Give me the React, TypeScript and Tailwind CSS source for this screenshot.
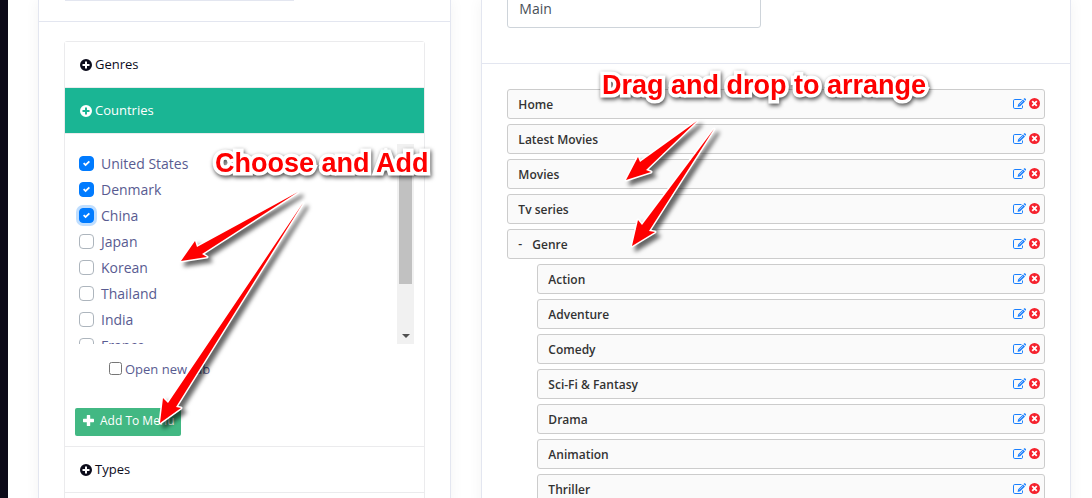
import React, { useState } from 'react'

interface MenuNode {
  label: string
  children?: MenuNode[]
}

const COUNTRIES = ['United States', 'Denmark', 'China', 'Japan', 'Korean', 'Thailand', 'India', 'France']

const MENU: MenuNode[] = [
  { label: 'Home' },
  { label: 'Latest Movies' },
  { label: 'Movies' },
  { label: 'Tv series' },
  {
    label: 'Genre',
    children: [
      { label: 'Action' },
      { label: 'Adventure' },
      { label: 'Comedy' },
      { label: 'Sci-Fi & Fantasy' },
      { label: 'Drama' },
      { label: 'Animation' },
      { label: 'Thriller' },
    ],
  },
]

const ARROWS = [
  '181,261 195,241 197,247 298,192 202,254 207,257',
  '160,423 163,398 168,403 303,203 176,407 181,408',
  '626,180 638,157 640,162 697,121 646,170 651,172',
  '632,246 638,220 642,225 714,129 649,231 655,232',
]

const PlusCircleIcon: React.FC = () => (
  <svg viewBox="0 0 12 12" className="size-3" fill="currentColor" fillRule="evenodd">
    <path d="M6 0a6 6 0 1 0 0 12A6 6 0 0 0 6 0zM5 2.500h2V5h2.500v2H7v2.500H5V7H2.500V5H5z" />
  </svg>
)

const PlusIcon: React.FC = () => (
  <svg viewBox="0 0 11 11" className="size-[11px]" fill="currentColor">
    <path d="M4.4 0h2.2a.6.6 0 0 1 .6.6v3.2h3.2a.6.6 0 0 1 .6.6v2.2a.6.6 0 0 1-.6.6H7.200v3.2a.6.6 0 0 1-.6.6H4.4a.6.6 0 0 1-.6-.6V7.200H.6a.6.6 0 0 1-.6-.6V4.4a.6.6 0 0 1 .6-.6h3.200V.6a.6.6 0 0 1 .6-.6z" />
  </svg>
)

const EditIcon: React.FC = () => (
  <svg viewBox="0 0 13 12" className="h-3 w-[13px]" fill="none">
    <path stroke="currentColor" d="M8.500 1.500H1.800Q.5 1.500.5 2.800v6.400Q.5 10.500 1.800 10.500h6.900Q9.500 10.500 9.500 9.200V7.500" />
    <path fill="currentColor" d="M4.600 8.900l.6-2.700L10 1.400l2 2-4.800 4.800z M10.600.9l.6-.6q.4-.3.8 0l1 1q.3.4 0 .8l-.6.6z" />
    <path stroke="#fafafa" strokeWidth=".6" d="M6.400 6.700l3.700-3.700" />
  </svg>
)

const RemoveIcon: React.FC = () => (
  <svg viewBox="0 0 12 12" className="size-[11px]">
    <circle cx="6" cy="6" r="6" fill="currentColor" />
    <path stroke="#fff" strokeWidth="2" d="M3.500 3.500l5 5M8.500 3.500l-5 5" />
  </svg>
)

const AccordionHeader: React.FC<{ label: string; active?: boolean }> = ({ label, active }) => (
  <button
    type="button"
    className={`flex h-[46px] w-full items-center gap-[3px] border-b border-[#ebebed] px-[15px] text-left text-[13px] ${
      active ? 'bg-[#1ab594] font-medium text-white' : 'bg-white text-[#0c0c1b]'
    }`}
  >
    <PlusCircleIcon />
    {label}
  </button>
)

const CountryOption: React.FC<{ label: string; checked: boolean; focused: boolean; onToggle: () => void }> = ({
  label,
  checked,
  focused,
  onToggle,
}) => (
  <label className="flex h-[26px] items-center gap-[7px] text-[14px] text-[#595b91]">
    <span className="relative flex">
      <input
        type="checkbox"
        checked={checked}
        onChange={onToggle}
        className={`size-[15px] appearance-none rounded-[4px] border border-[#adb5bd] bg-white checked:border-[#007bff] checked:bg-[#007bff] ${
          focused ? 'ring-3 ring-[#bfdeff]' : ''
        }`}
      />
      {checked && (
        <svg viewBox="0 0 8 8" className="pointer-events-none absolute top-1 left-1 size-[7px]">
          <path fill="#fff" d="M6.564.75l-3.59 3.612-1.538-1.55L0 4.26 2.974 7.25 8 2.193z" />
        </svg>
      )}
    </span>
    {label}
  </label>
)

const MenuRow: React.FC<{ node: MenuNode }> = ({ node }) => (
  <li>
    <div className="mb-[5px] flex h-[30px] items-center rounded-[3px] border border-[#ccc] bg-[#fafafa] pr-1 pl-[10px] text-[12px] font-semibold text-[#333]">
      {node.children && (
        <button type="button" aria-label="Collapse" className="w-[14px] text-left">
          -
        </button>
      )}
      <span className="flex-1 pt-px">{node.label}</span>
      <span className="flex items-center gap-[3px] pb-px">
        <button type="button" aria-label={`Edit ${node.label}`} className="text-[#1a80ff]">
          <EditIcon />
        </button>
        <button type="button" aria-label={`Remove ${node.label}`} className="text-[#f5222d]">
          <RemoveIcon />
        </button>
      </span>
    </div>
    {node.children && (
      <ol className="pl-[30px]">
        {node.children.map((child) => (
          <MenuRow key={child.label} node={child} />
        ))}
      </ol>
    )}
  </li>
)

// Red callout text with a white outline
const Callout: React.FC<{ className: string; children: React.ReactNode }> = ({ className, children }) => (
  <p
    className={`pointer-events-none absolute font-['Liberation_Sans',Arial,sans-serif] text-[27px] leading-8 font-bold whitespace-nowrap text-[#fe0000] [-webkit-text-stroke:7px_white] [filter:drop-shadow(1px_2px_2px_rgba(0,0,0,0.7))] [paint-order:stroke_fill] ${className}`}
  >
    {children}
  </p>
)

const App: React.FC = () => {
  const [selected, setSelected] = useState<string[]>(['United States', 'Denmark', 'China'])
  const [newTab, setNewTab] = useState(false)

  const toggle = (label: string) =>
    setSelected((prev) => (prev.includes(label) ? prev.filter((l) => l !== label) : [...prev, label]))

  return (
    <div className="relative flex h-screen overflow-hidden bg-white font-['Open_Sans','Noto_Sans',sans-serif]">
      <aside className="w-2 shrink-0 bg-[#0c0a18]" />

      <main className="flex flex-1 items-stretch gap-[30px] pr-[21px] pl-[30px]">
        {/* Menu sources */}
        <section className="h-max min-h-full flex-[413_1_0px] border-x border-[#e3e6f0] shadow-[0_0_14px_rgba(0,0,0,0.05)]">
          <div className="h-[22px] border-b border-[#e3e6f0] px-[26px]">
            <input
              aria-label="Menu title"
              className="block h-px w-[229px] border-b border-[#e3e6f0]"
            />
          </div>

          <div className="mx-[25px] mt-[19px] rounded-[3px] border border-[#ebebed] pb-3">
            <AccordionHeader label="Genres" />
            <AccordionHeader label="Countries" active />

            <div className="border-b border-[#ebebed] px-[10px] pt-[10px] pb-[10px]">
              <div className="flex h-[200px] overflow-hidden">
                <div className="flex-1 px-1 pt-[6px]">
                  {COUNTRIES.map((c) => (
                    <CountryOption
                      key={c}
                      label={c}
                      checked={selected.includes(c)}
                      focused={c === 'China'}
                      onToggle={() => toggle(c)}
                    />
                  ))}
                </div>
                {/* Scrollbar */}
                <div className="flex w-[17px] flex-col items-center justify-between bg-[#f1f1f1] pt-[17px] pb-[6px]">
                  <div className="h-[123px] w-[13px] bg-[#c1c1c1]" />
                  <div className="border-x-4 border-t-4 border-x-transparent border-t-[#505050]" />
                </div>
              </div>

              <label className="mt-[14px] ml-[34px] flex h-6 items-center gap-[3px] text-[13px] text-[#595b91]">
                <input
                  type="checkbox"
                  checked={newTab}
                  onChange={(e) => setNewTab(e.target.checked)}
                  className="mb-1 size-[13px]"
                />
                Open new tab
              </label>

              <button
                type="button"
                className="mt-[26px] flex h-7 w-[106px] items-center gap-[6px] rounded-[2px] bg-[#42b883] pb-[3px] pl-2 text-[12px] font-medium whitespace-nowrap text-white"
              >
                <PlusIcon />
                Add To Menu
              </button>
            </div>

            <AccordionHeader label="Types" />
          </div>
        </section>

        {/* Menu structure */}
        <section className="h-max min-h-full flex-[590_1_0px] border-x border-[#e3e6f0] shadow-[0_0_14px_rgba(0,0,0,0.05)]">
          <div className="flex h-16 items-start border-b border-[#e3e6f0] px-[25px]">
            <input
              aria-label="Menu name"
              defaultValue="Main"
              className="-mt-3 h-10 w-[254px] rounded-[3px] border border-[#ced4da] px-[11px] text-[14px] text-[#495057]"
            />
          </div>
          <ol className="px-[25px] pt-[25px]">
            {MENU.map((node) => (
              <MenuRow key={node.label} node={node} />
            ))}
          </ol>
        </section>
      </main>

      {/* Callouts */}
      <svg
        width="1092"
        height="498"
        className="pointer-events-none absolute top-0 left-0 [filter:drop-shadow(4px_4px_2px_rgba(0,0,0,0.6))]"
      >
        {ARROWS.map((points) => (
          <polygon
            key={points}
            points={points}
            fill="#fe0000"
            stroke="#fff"
            strokeWidth="3"
            strokeLinejoin="round"
            style={{ paintOrder: 'stroke' }}
          />
        ))}
      </svg>
      <Callout className="top-[147px] left-[215px]">Choose and Add</Callout>
      <Callout className="top-[69px] left-[602px]">Drag and drop to arrange</Callout>
    </div>
  )
}

export default App
